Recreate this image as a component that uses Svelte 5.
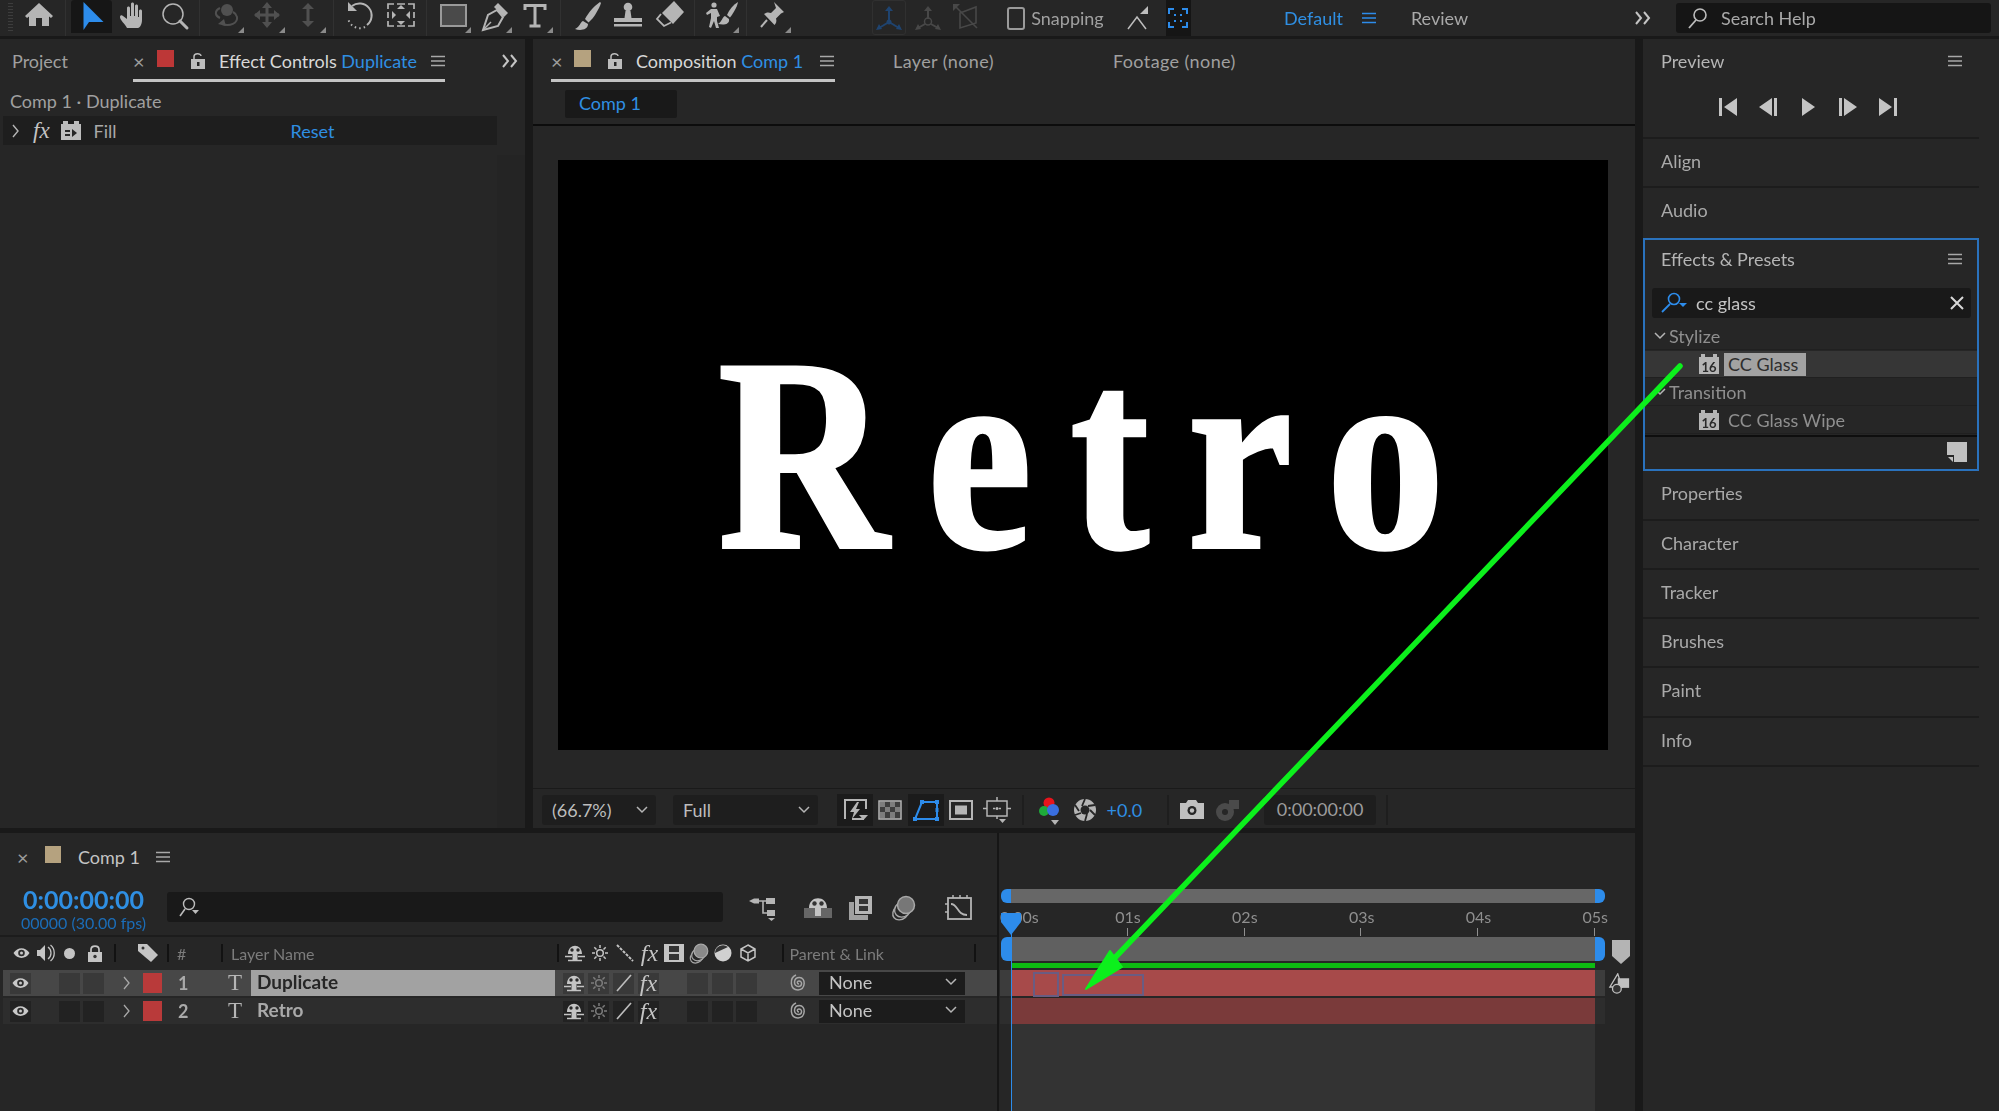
<script>
  // after effects workspace, cc glass lookup
  const G = "#b5b5b5";
  const D = "#505050";

  const toolGroups = [
    [
      { w: 50, svg: `<path d="M18 3 4 16l2 2 2-1.500V26h7v-8h6v8h7v-9.500l2 1.500 2-2z" fill="${G}"/>` },
    ],
    [
      { on: true, svg: `<path d="M9.500 2 29.500 22H15L9.500 30z" fill="#2d8ceb"/>` },
      { svg: `<path d="M12 28c-2-4-7-8-7-11 0-2 2-2 3-1l4 3V8c0-2 3-2 3 0v8h1V4c0-2 3-2 3 0v12h1V6c0-2 3-2 3 0v11h1v-6c0-2 3-2 3 0v9c0 4-2 8-4 8z" fill="${G}"/>` },
      { svg: `<circle cx="17" cy="14" r="10" fill="none" stroke="${G}" stroke-width="1.500"/><path d="m24 21 7 7" stroke="${G}" stroke-width="3" stroke-linecap="round"/>` },
    ],
    [
      { tri: true, svg: `<circle cx="19" cy="10" r="6" fill="${D}"/><path d="M12 8c-6 3-5 8 0 10M14 24c8 3 16-1 15-7-.5-2-2-4-4-5" fill="none" stroke="${D}" stroke-width="2"/><path d="m16 19-6 5 8 2z" fill="${D}"/>` },
      { tri: true, svg: `<path d="M18 4v22M6 15h24" stroke="${D}" stroke-width="3"/><path d="m18 2 5 6H13zM18 28l5-6H13zM5 15l6-5v10zM31 15l-6-5v10z" fill="${D}"/>` },
      { tri: true, svg: `<path d="M18 5v20" stroke="${D}" stroke-width="3"/><path d="m18 3 6 6H12zM18 27l6-6H12z" fill="${D}"/>` },
    ],
    [
      { svg: `<path d="M10 6A12 12 0 1 1 25 25" fill="none" stroke="${G}" stroke-width="2"/><path d="M6 2v9h9z" fill="${G}"/><path d="M23 27A12 12 0 0 1 6 18" fill="none" stroke="${G}" stroke-width="2" stroke-dasharray="1.500 3"/>` },
      { svg: `<path d="M5 9V4h6M25 4h6v5M31 21v5h-6M11 26H5v-5M14 4h8M14 26h8M5 12v6M31 12v6" fill="none" stroke="${G}" stroke-width="1.700"/><path d="m14 9 4-4 4 4zM14 21l4 4 4-4zM9 11v8l4-4zM27 11v8l-4-4z" fill="${G}"/>` },
    ],
    [
      { tri: true, svg: `<rect x="6" y="5" width="25" height="21" fill="#4a4a4a" stroke="#9a9a9a" stroke-width="2"/>` },
      { tri: true, svg: `<path d="m7 30 5-15 9-5 6 7-5 9z" fill="none" stroke="${G}" stroke-width="2"/><path d="m22 3 10 10-4 4-10-10z" fill="${G}"/><path d="m7 30 8-8" stroke="${G}" stroke-width="1.500"/>` },
      { tri: true, svg: `<path d="M8 10V5.500h20V10M18 5.500V26M12.500 26h11" fill="none" stroke="${G}" stroke-width="3"/>` },
    ],
    [
      { svg: `<path d="M31 2c-6 4-12 11-15 17l3.500 3.500C25 18 30 9 32 3z" fill="${G}"/><path d="M14 21c-3 1-3 6-8 8 5 2 13 1 13-5z" fill="${G}"/>` },
      { svg: `<circle cx="18" cy="7" r="4.300" fill="${G}"/><path d="M15.500 11h5l1 7H32v4H4v-4h10.500zM4 24h28v2.500H4z" fill="${G}"/>` },
      { svg: `<path d="m23 1 10 11-11 12-11-11z" fill="${G}"/><path d="m10 14-4 5 7 7 7-3.500" fill="none" stroke="${G}" stroke-width="1.800"/>` },
    ],
    [
      { tri: true, svg: `<circle cx="11" cy="5" r="2.600" fill="${G}"/><path d="M8 9h6l3 7-3 1v4l2 7h-3l-2-7-3 7-2-1 2-9v-5l-4 2-1-2z" fill="${G}"/><path d="M35 2c-5 3-9 8-11 13l3 2.500c3-4 7-10 8-15.500z" fill="${G}"/><path d="M22 16c-3 1-3 6-7 8 5 1 12 1 11-5z" fill="${G}"/>` },
    ],
    [
      { tri: true, svg: `<path d="m19 2 10 10-3 1.500-5 5c1 3 0 5-1.500 6.500L9 14c2-1.500 4-2 7-1l5-5-1-3z" fill="${G}"/><path d="m12 20-6 7" stroke="${G}" stroke-width="2"/>` },
    ],
  ];

  const viewerIcons = [
    { on: true, svg: `<path d="M5 24V5h21v9M24 24H12" fill="none" stroke="${G}" stroke-width="2"/><path d="m17 7-7 10h4l-2 7 8-10h-4l3-7z" fill="${G}"/><path d="m19 20h9l-4.500 5z" fill="${G}"/>` },
    { svg: `<rect x="4" y="6" width="22" height="18" fill="#3d3d3d" stroke="${G}" stroke-width="1.500"/><path d="M5 7h5v5H5zM15 7h5v5h-5zM10 12h5v5h-5zM20 12h5v5h-5zM5 17h5v6H5zM15 17h5v6h-5z" fill="#7d7d7d"/>` },
    { on: true, svg: `<path d="M11 7h15v17H4z" fill="none" stroke="#2d8ceb" stroke-width="2"/><path d="M9 5h4v4H9zM24 5h4v4h-4zM2 22h4v4H2zM24 22h4v4h-4zM24.500 13h3v4h-3z" fill="#2d8ceb"/>` },
    { svg: `<rect x="4" y="6" width="22" height="18" fill="none" stroke="${G}" stroke-width="2"/><rect x="9" y="10.500" width="12" height="9" fill="${G}"/>` },
    { svg: `<rect x="5" y="6" width="20" height="15" fill="none" stroke="${G}" stroke-width="1.500"/><path d="M15 2v4M15 21v3M1 13.500h4M25 13.500h4M11 13.500h2M17 13.500h2" stroke="${G}" stroke-width="1.500"/><circle cx="15" cy="13.500" r="1.500" fill="${G}"/><path d="M17 24h7l-3.500 4z" fill="${G}"/>` },
  ];

  const panels = ["Properties", "Character", "Tracker", "Brushes", "Paint", "Info"];
  const seconds = ["01s", "02s", "03s", "04s", "05s"];

  const layers = [
    { n: 1, name: "Duplicate", selected: true },
    { n: 2, name: "Retro", selected: false },
  ];
</script>

{#snippet burger(color = "#a8a8a8")}
  <svg class="burger" width="14" height="12" viewBox="0 0 14 12"><path d="M0 1.500h14M0 6h14M0 10.500h14" stroke={color} stroke-width="1.500" /></svg>
{/snippet}

{#snippet more()}
  <svg width="18" height="16" viewBox="0 0 18 16"><path d="m2 2 5 6-5 6M10 2l5 6-5 6" fill="none" stroke="#c4c4c4" stroke-width="2" /></svg>
{/snippet}

{#snippet lock()}
  <svg width="14" height="18" viewBox="0 0 14 18"><path d="M3 8V4.500C3 1 10 1 10 4" fill="none" stroke="#bdbdbd" stroke-width="1.500" /><rect x="0" y="7" width="14" height="10" fill="#bdbdbd" /><rect x="6" y="10" width="2.500" height="4" fill="#262626" /></svg>
{/snippet}

{#snippet badge16()}
  <svg width="20" height="20" viewBox="0 0 20 20"><path d="M0 3h2V0h4v3h8V0h4v3h2v17H0z" fill="#b5b5b5" /><text x="10" y="18" text-anchor="middle" font-size="13" font-weight="700" fill="#2a2a2a" font-family="Lato, sans-serif">16</text></svg>
{/snippet}

{#snippet eye()}
  <svg width="17" height="12" viewBox="0 0 17 12"><path d="M.5 6C4.500-.5 12.500-.5 16.500 6 12.500 12.500 4.500 12.500.5 6z" fill="#c8c8c8" /><circle cx="8.500" cy="6" r="3.300" fill="#2c2c2c" /><circle cx="8.500" cy="6" r="1.500" fill="#c8c8c8" /></svg>
{/snippet}

{#snippet shy()}
  <svg width="20" height="17" viewBox="0 0 20 17"><path d="M3 9C3-2 17-2 17 9h-4.500v7h-5V9z" fill="#c4c4c4" /><circle cx="7" cy="5" r="1.700" fill="#2a2a2a" /><circle cx="13" cy="5" r="1.700" fill="#2a2a2a" /><path d="M0 11.500h7M13 11.500h7M3 15.500h14" stroke="#c4c4c4" stroke-width="1.300" /></svg>
{/snippet}

{#snippet sun(color = "#c4c4c4")}
  <svg width="16" height="16" viewBox="0 0 16 16"><circle cx="8" cy="8" r="3.300" fill="none" stroke={color} stroke-width="1.500" /><path d="M8 0v3M8 13v3M0 8h3M13 8h3M2.300 2.300l2.200 2.200M11.500 11.500l2.200 2.200M13.700 2.300l-2.200 2.200M4.500 11.500l-2.200 2.200" stroke={color} stroke-width="1.500" /></svg>
{/snippet}

{#snippet fx(size = 24)}
  <span class="fx" style="font-size: {size}px">fx</span>
{/snippet}

{#snippet spiral()}
  <svg width="21" height="22" viewBox="0 0 21 22"><path d="M11 12c-2 0-2.500-3 0-3 3.500 0 3.500 5.500-.5 5.500-5.500 0-5.500-9 1-9 6.500 0 6.500 12-1.500 12.500C2 18 1 6 8 3" fill="none" stroke="#a6a6a6" stroke-width="1.500" /></svg>
{/snippet}

{#snippet chevron()}
  <svg width="12" height="8" viewBox="0 0 12 8"><path d="m1 1 5 5 5-5" fill="none" stroke="#b5b5b5" stroke-width="1.500" /></svg>
{/snippet}

<div class="app">
  <header class="toolbar">
    <i class="grip"></i>
    <div class="tools">
      {#each toolGroups as group}
        <div class="tool-group">
          {#each group as tool}
            <div class="tool" class:on={tool.on} style="width: {tool.w ?? 41}px">
              <svg width="36" height="36" viewBox="0 0 36 36">{@html tool.svg}</svg>
              {#if tool.tri}<i class="tri"></i>{/if}
            </div>
          {/each}
        </div>
      {/each}
    </div>
    <div class="axes">
      <div class="axis-on">
        <svg width="32" height="33" viewBox="0 0 32 33"><path d="M16 8v13L6 27m10-6 10 6" fill="none" stroke="#1f4470" stroke-width="2" /><path d="m16 5 4 5h-8zM3 29l6-1-3-5zM29 29l-6-1 3-5z" fill="#1f4470" /><circle cx="16" cy="21" r="2.500" fill="#1f4470" /></svg>
      </div>
      <svg width="34" height="33" viewBox="0 0 32 33"><path d="M16 8v10M13 23l-7 4m13-4 7 4" fill="none" stroke="#484848" stroke-width="2" /><path d="m16 5 4 5h-8zM3 29l6-1-3-5zM29 29l-6-1 3-5z" fill="#484848" /><circle cx="16" cy="20.500" r="3.500" fill="none" stroke="#484848" stroke-width="1.500" /></svg>
      <svg width="32" height="33" viewBox="0 0 32 33"><path d="M10 12 26 6v16L10 27zM5 5l22 22" fill="none" stroke="#484848" stroke-width="1.600" /><path d="M3 3h7L3 10z" fill="#484848" /></svg>
    </div>
    <div class="snap">
      <span class="box"></span>
      <span>Snapping</span>
      <svg class="snap-a" width="26" height="26" viewBox="0 0 26 26"><path d="M2 24 11 12l9 12" fill="none" stroke="#bdbdbd" stroke-width="1.500" /><path d="m14 9 8-8v8z" fill="#bdbdbd" /></svg>
      <div class="snap-b">
        <svg width="22" height="22" viewBox="0 0 22 22"><path d="M2 7V2h5M15 2h5v5M20 15v5h-5M7 20H2v-5" fill="none" stroke="#2d8ceb" stroke-width="2" /><path d="M7 7h2v2H7zM13 7h2v2h-2zM7 13h2v2H7zM13 13h2v2h-2z" fill="#2d8ceb" /></svg>
      </div>
    </div>
    <nav class="workspaces">
      <span class="blue">Default</span>
      {@render burger("#2d8ceb")}
      <span class="review">Review</span>
    </nav>
    <div class="more-top">{@render more()}</div>
    <div class="help">
      <svg width="24" height="22" viewBox="0 0 24 22"><circle cx="14" cy="8" r="6" fill="none" stroke="#bcbcbc" stroke-width="1.600" /><path d="m10 13-7 8" stroke="#bcbcbc" stroke-width="1.800" /></svg>
      <span>Search Help</span>
    </div>
  </header>

  <main class="main">
    <div class="work">
      <div class="upper">
        <section class="panel effect">
          <div class="tabs">
            <span class="tab-plain">Project</span>
            <div class="tab active effect-tab">
              <span class="x wide">×</span>
              <i class="swatch red"></i>
              {@render lock()}
              <span class="tab-name">Effect Controls <b>Duplicate</b></span>
              {@render burger()}
            </div>
            <div class="tab-more">{@render more()}</div>
          </div>
          <div class="crumb">Comp 1 · Duplicate</div>
          <div class="fx-row">
            <svg width="8" height="14" viewBox="0 0 8 14"><path d="m1 1 5 6-5 6" fill="none" stroke="#b5b5b5" stroke-width="1.400" /></svg>
            {@render fx(23)}
            <svg class="fx-ico" width="20" height="19" viewBox="0 0 20 19"><path d="M0 3h2V0h5v3h6V0h5v3h2v16H0z" fill="#bdbdbd" /><path d="M4 9h5v2H4zM4 13h5v2H4zM11 8l5 4-5 4z" fill="#262626" /></svg>
            <span class="fill">Fill</span>
            <span class="reset">Reset</span>
          </div>
          <div class="effect-side"></div>
        </section>

        <section class="panel comp">
          <div class="tabs comp-tabs">
            <div class="tab active comp-tab">
              <span class="x mid">×</span>
              <i class="swatch tan"></i>
              {@render lock()}
              <span class="tab-name">Composition <b>Comp 1</b></span>
              {@render burger()}
            </div>
            <span class="tab-plain layer-tab">Layer (none)</span>
            <span class="tab-plain footage-tab">Footage (none)</span>
          </div>
          <div class="flow">
            <span class="flow-chip">Comp 1</span>
          </div>
          <div class="viewer-wrap">
            <div class="viewer"><span class="retro">Retro</span></div>
          </div>
          <div class="viewer-bar">
            <div class="select zoom-select"><span>(66.7%)</span>{@render chevron()}</div>
            <div class="select full-select"><span>Full</span>{@render chevron()}</div>
            <div class="viewer-icons">
              {#each viewerIcons as ico}
                <div class="v-ico" class:on={ico.on}>
                  <svg width="30" height="30" viewBox="0 0 30 30">{@html ico.svg}</svg>
                </div>
              {/each}
            </div>
            <i class="bar-sep"></i>
            <svg class="rgb" width="26" height="36" viewBox="0 0 26 36"><circle cx="13" cy="10" r="5.500" fill="#e8141c" /><circle cx="8" cy="18" r="5" fill="#1eaa3a" /><circle cx="17" cy="17" r="6" fill="#3a6fe0" /><path d="m15 27 8 0-4 5z" fill="#b5b5b5" /></svg>
            <svg class="shutter" width="24" height="24" viewBox="0 0 24 24"><circle cx="12" cy="12" r="11" fill="#b5b5b5" /><circle cx="12" cy="12" r="4.500" fill="#262626" /><path d="M12 1 9 8M22 7l-7 1M22 17l-5-5M12 23l2-7M2 17l6-2M2 7l4 6" stroke="#262626" stroke-width="1.800" /></svg>
            <span class="exposure">+0.0</span>
            <i class="bar-sep two"></i>
            <svg class="camera" width="24" height="19" viewBox="0 0 24 19"><path d="M0 3h6l2-3h8l2 3h6v16H0z" fill="#c0c0c0" /><circle cx="12" cy="10.500" r="4.500" fill="#262626" /><circle cx="12" cy="10.500" r="2.200" fill="#c0c0c0" /></svg>
            <svg class="camera2" width="26" height="24" viewBox="0 0 26 24"><circle cx="10" cy="14" r="9" fill="#4a4a4a" /><circle cx="10" cy="14" r="3" fill="#262626" /><rect x="14" y="2" width="10" height="9" fill="#4a4a4a" /></svg>
            <div class="timecode-box">0:00:00:00</div>
            <span class="bar-end"></span>
          </div>
        </section>
      </div>

      <section class="panel timeline">
        <div class="tl-left">
          <div class="tl-tab">
            <span class="x tl-x">×</span>
            <i class="swatch tan small"></i>
            <span class="tl-name">Comp 1</span>
            {@render burger()}
          </div>
          <div class="tl-controls">
            <div class="clock">
              <div class="time">0:00:00:00</div>
              <div class="fps">00000 (30.00 fps)</div>
            </div>
            <div class="tl-search">
              <svg width="24" height="20" viewBox="0 0 24 20"><circle cx="11" cy="7" r="5.500" fill="none" stroke="#bcbcbc" stroke-width="1.400" /><path d="m7 12-5 7" stroke="#bcbcbc" stroke-width="1.600" /><path d="m14 13 7 0-3.500 4z" fill="#bcbcbc" /></svg>
            </div>
            <div class="tl-icons">
              <svg width="30" height="26" viewBox="0 0 30 26"><path d="M8 6h7v12h8M15 6h8" stroke="#b5b5b5" stroke-width="1.600" fill="none" /><path d="m1 6 5-2.500h5v5H6z" fill="#b5b5b5" /><rect x="18" y="3" width="9" height="6" fill="#b5b5b5" /><rect x="19" y="15" width="8" height="6" fill="#b5b5b5" /><path d="m20 23h7l-3.500 3z" fill="#b5b5b5" /></svg>
              <svg class="ti2" width="28" height="22" viewBox="0 0 28 22"><path d="M0 11h28v10H0z" fill="#666" /><path d="M5 11C5-2 23-2 23 11h-6v8h-6v-8z" fill="#c4c4c4" /><circle cx="10.500" cy="6.500" r="2.200" fill="#333" /><circle cx="17.500" cy="6.500" r="2.200" fill="#333" /></svg>
              <svg class="ti3" width="26" height="26" viewBox="0 0 26 26"><path d="M1 7h5v13h14v5H1z" fill="#a0a0a0" /><rect x="7" y="1" width="17" height="18" fill="#b5b5b5" /><path d="M11 4h9v5h-9zM11 11h9v5h-9z" fill="#333" /></svg>
              <svg class="ti4" width="26" height="26" viewBox="0 0 26 26"><ellipse cx="11" cy="17" rx="9" ry="7" transform="rotate(-40 11 17)" fill="none" stroke="#a8a8a8" stroke-width="1.400" /><ellipse cx="13" cy="14" rx="9" ry="7.500" transform="rotate(-40 13 14)" fill="#262626" stroke="#a8a8a8" stroke-width="1.400" /><circle cx="16" cy="10" r="8.500" fill="#777" stroke="#a8a8a8" stroke-width="1.500" /></svg>
              <svg class="ti5" width="28" height="26" viewBox="0 0 28 26"><rect x="3" y="3" width="23" height="21" fill="none" stroke="#b5b5b5" stroke-width="1.800" /><path d="M8 0v3M15 0v3M22 0v3M0 9h3M0 17h3" stroke="#b5b5b5" stroke-width="1.500" /><path d="M6 9c7 0 6 11 16 11" fill="none" stroke="#b5b5b5" stroke-width="1.800" /></svg>
            </div>
          </div>

          <div class="tl-head">
            <span class="h-eye">{@render eye()}</span>
            <svg class="h-sound" width="18" height="18" viewBox="0 0 18 18"><path d="M0 6h3l5-5v16l-5-5H0z" fill="#c4c4c4" /><path d="M11 3c4 3 4 9 0 12M13.500 1c5 4 5 12 0 16" fill="none" stroke="#c4c4c4" stroke-width="1.300" /></svg>
            <i class="dot"></i>
            <svg class="h-lock" width="14" height="17" viewBox="0 0 14 17"><path d="M3 8V4.500c0-4.500 8-4.500 8 0V8" fill="none" stroke="#c4c4c4" stroke-width="1.700" /><path d="M0 7h14v10H0z" fill="#c4c4c4" /><circle cx="7" cy="11.500" r="1.700" fill="#333" /></svg>
            <i class="sep s-lock"></i>
            <svg class="tag" width="22" height="20" viewBox="0 0 22 20"><path d="M1 1h9l11 11-7 7L1 8z" fill="#c4c4c4" /><circle cx="6" cy="5" r="1.500" fill="#333" /></svg>
            <i class="sep s-tag"></i>
            <span class="hash">#</span>
            <i class="sep s-hash"></i>
            <span class="h-name">Layer Name</span>
            <i class="sep"></i>
            <div class="head-sw">
              <span>{@render shy()}</span>
              <span>{@render sun()}</span>
              <span><svg width="18" height="18" viewBox="0 0 18 18"><path d="m1 1 16 16" stroke="#c4c4c4" stroke-width="2" stroke-dasharray="3 1.200" /></svg></span>
              <span>{@render fx()}</span>
              <span><svg width="20" height="18" viewBox="0 0 20 18"><rect x="0" y="0" width="20" height="18" fill="#c4c4c4" /><rect x="5" y="2" width="10" height="6" fill="#333" /><rect x="5" y="10" width="10" height="6" fill="#333" /></svg></span>
              <span><svg width="21" height="21" viewBox="0 0 26 26"><ellipse cx="11" cy="17" rx="9" ry="7" transform="rotate(-40 11 17)" fill="none" stroke="#a8a8a8" stroke-width="1.500" /><ellipse cx="13" cy="14" rx="9" ry="7.500" transform="rotate(-40 13 14)" fill="#262626" stroke="#a8a8a8" stroke-width="1.500" /><circle cx="16" cy="10" r="8.500" fill="#8a8a8a" stroke="#a8a8a8" stroke-width="1.500" /></svg></span>
              <span><svg width="18" height="18" viewBox="0 0 18 18"><circle cx="9" cy="9" r="8.500" fill="#d0d0d0" /><path d="M1 9a8 8 0 0 1 13-6z" fill="#333" /></svg></span>
              <span><svg width="16" height="18" viewBox="0 0 16 18"><path d="m8 1 7 4v8l-7 4-7-4V5zM1 5l7 4 7-4M8 9v8" fill="none" stroke="#c4c4c4" stroke-width="1.500" /></svg></span>
            </div>
            <i class="sep s-sw"></i>
            <span class="h-parent">Parent &amp; Link</span>
            <i class="sep"></i>
          </div>

          {#each layers as layer}
            <div class="layer" class:sel={layer.selected}>
              <div class="cell eye-cell">{@render eye()}</div>
              <div class="cell c1"></div>
              <div class="cell c2"></div>
              <svg class="twirl" width="8" height="14" viewBox="0 0 8 14"><path d="m1 1 5 6-5 6" fill="none" stroke="#a8a8a8" stroke-width="1.300" /></svg>
              <i class="label"></i>
              <span class="num">{layer.n}</span>
              <span class="t-ico">T</span>
              <span class="lname" class:chip={layer.selected}>{layer.name}</span>
              <div class="switches">
                <div class="cell sw">{@render shy()}</div>
                <div class="cell sw">{@render sun("#7c7c7c")}</div>
                <div class="cell sw"><svg width="16" height="18" viewBox="0 0 16 18"><path d="M1 17 15 1" stroke="#bdbdbd" stroke-width="1.700" /></svg></div>
                <div class="cell sw">{@render fx()}</div>
              </div>
              <div class="cell s1"></div>
              <div class="cell s2"></div>
              <div class="cell s3"></div>
              <div class="spiral">{@render spiral()}</div>
              <div class="none"><span>None</span>{@render chevron()}</div>
            </div>
          {/each}
        </div>

        <div class="tl-right">
          <div class="range">
            <i class="cap l"></i>
            <div class="range-bar"></div>
            <i class="cap r"></i>
          </div>
          <div class="ruler">
            <span class="zero">0:00s</span>
            {#each seconds as s}
              <div class="sec"><span>{s}</span><i></i></div>
            {/each}
          </div>
          <div class="work-area">
            <i class="cap l"></i>
            <div class="area-bar"></div>
            <i class="cap r"></i>
            <svg class="marker" width="18" height="24" viewBox="0 0 18 24"><path d="M0 0h18v16l-9 8-9-8z" fill="#b4b4b4" /></svg>
          </div>
          <div class="green-line"></div>
          <div class="bar-row hi">
            <div class="bar b1">
              <i class="ghost g1"></i>
              <i class="ghost g2"></i>
            </div>
            <svg class="comp-btn" width="23" height="21" viewBox="0 0 26 24"><path d="M11 1 2 16h14z" fill="none" stroke="#c0c0c0" stroke-width="1.500" /><rect x="11" y="6" width="13" height="11" fill="#c0c0c0" /><circle cx="10" cy="18" r="5" fill="#333" stroke="#c0c0c0" stroke-width="1.500" /></svg>
          </div>
          <div class="bar-row low">
            <div class="bar b2"></div>
          </div>
          <div class="track-rest"></div>
          <i class="playhead"></i>
          <svg class="head" width="20" height="22" viewBox="0 0 20 22"><path d="M0 0h20v9L10 22 0 9z" fill="#2d8ceb" /></svg>
        </div>
      </section>
    </div>

    <aside class="side">
      <section class="preview">
        <div class="side-title between"><span>Preview</span>{@render burger()}</div>
        <div class="transport">
          <svg width="20" height="18" viewBox="0 0 20 18"><path d="M1 0h3v18H1zM19 0v18L6 9z" fill="#c4c4c4" /></svg>
          <svg width="20" height="18" viewBox="0 0 20 18"><path d="M16 0h3v18h-3zM14 0v18L1 9z" fill="#c4c4c4" /></svg>
          <svg width="20" height="18" viewBox="0 0 20 18"><path d="M4 0v18l13-9z" fill="#c4c4c4" /></svg>
          <svg width="20" height="18" viewBox="0 0 20 18"><path d="M1 0h3v18H1zM6 0v18l13-9z" fill="#c4c4c4" /></svg>
          <svg width="20" height="18" viewBox="0 0 20 18"><path d="M16 0h3v18h-3zM1 0v18l13-9z" fill="#c4c4c4" /></svg>
        </div>
      </section>
      <div class="side-row">Align</div>
      <div class="side-row last">Audio</div>

      <section class="presets">
        <div class="side-title between"><span>Effects &amp; Presets</span>{@render burger()}</div>
        <div class="preset-search">
          <svg width="28" height="22" viewBox="0 0 28 22"><circle cx="14" cy="7" r="5.500" fill="none" stroke="#2d8ceb" stroke-width="1.600" /><path d="m10 12-8 8" stroke="#2d8ceb" stroke-width="1.800" /><path d="m19 11 8 0-4 4z" fill="#2d8ceb" /></svg>
          <span class="q">cc glass</span>
          <svg class="clear" width="14" height="14" viewBox="0 0 14 14"><path d="m1 1 12 12M13 1 1 13" stroke="#d8d8d8" stroke-width="2" /></svg>
        </div>
        <div class="tree folder">{@render chevron()}<span>Stylize</span></div>
        <div class="tree item sel">{@render badge16()}<span class="sel-chip">CC Glass</span></div>
        <div class="tree folder">{@render chevron()}<span>Transition</span></div>
        <div class="tree item">{@render badge16()}<span class="plain-item">CC Glass Wipe</span></div>
        <div class="preset-foot">
          <svg width="20" height="20" viewBox="0 0 20 20"><path d="M0 0h20v20H7v-7H0z" fill="#c0c0c0" /><path d="M1 15h5v5z" fill="#c0c0c0" /></svg>
        </div>
      </section>

      {#each panels as p}
        <div class="side-row">{p}</div>
      {/each}
    </aside>
  </main>

  <svg class="arrow" width="1999" height="1111" viewBox="0 0 1999 1111">
    <path d="M1680 366 1107 966" stroke="#0cf01c" stroke-width="5.500" stroke-linecap="round" />
    <path d="M1086 989 1110 951 1122 967 Z" fill="#0cf01c" stroke="#0cf01c" stroke-width="2" stroke-linejoin="round" />
  </svg>
</div>

<style>
  :global(body) {
    margin: 0;
    background: #191919;
    overflow: hidden;
  }

  .app {
    position: relative;
    width: 1999px;
    height: 1111px;
    font-family: Lato, "Open Sans", sans-serif;
    font-size: 18px;
    color: #a9a9a9;
    overflow: hidden;
    filter: blur(0.35px);
  }

  svg {
    display: block;
    flex: none;
  }

  .blue,
  b {
    color: #2f8fe3;
    font-weight: 400;
  }

  /* top bar */
  .toolbar {
    height: 36px;
    display: flex;
    align-items: center;
    background: #262626;
    position: relative;
  }

  .grip {
    position: absolute;
    left: 8px;
    top: 3px;
    bottom: 4px;
    width: 5px;
    background: repeating-linear-gradient(#3d3d3d 0 1px, transparent 1px 3px);
  }

  .tools {
    display: flex;
    padding-left: 14px;
    width: 864px;
    flex: none;
    box-sizing: border-box;
  }

  .tool-group {
    display: flex;
    padding-right: 5px;
    margin-right: 6px;
    box-shadow: 1px 0 0 #313131;
  }

  .tool-group:first-child {
    padding-right: 1px;
  }

  .tool-group:last-child {
    box-shadow: none;
  }

  .tool {
    position: relative;
    height: 36px;
    display: flex;
    align-items: center;
    justify-content: center;
  }

  .tool.on {
    background: linear-gradient(#161616 33px, transparent 33px);
    border-radius: 3px;
  }

  .tri {
    position: absolute;
    right: 2px;
    bottom: 3px;
    border-left: 6px solid transparent;
    border-bottom: 6px solid #8a8a8a;
  }

  .axes {
    display: flex;
    gap: 5px;
    width: 139px;
    flex: none;
    margin-left: 8px;
    margin-right: -8px;
  }

  .axis-on {
    border: 1px solid #303030;
    border-radius: 3px;
    height: 33px;
    margin-top: -1px;
  }

  .snap {
    display: flex;
    align-items: center;
    color: #a0a0a0;
    width: 188px;
    flex: none;
  }

  .box {
    width: 22px;
    height: 23px;
    border: 2px solid #9a9a9a;
    border-radius: 3px;
    margin-right: 6px;
    box-sizing: border-box;
    margin-left: 4px;
  }

  .snap-a {
    margin-left: 22px;
  }

  .snap-b {
    margin-left: 14px;
    width: 32px;
    height: 36px;
    display: flex;
    align-items: center;
    justify-content: center;
    background: #151515;
  }

  .workspaces {
    display: flex;
    align-items: center;
    gap: 19px;
    width: 443px;
    flex: none;
    padding-left: 93px;
    box-sizing: border-box;
  }

  .review {
    margin-left: 16px;
  }

  .more-top {
    width: 42px;
    flex: none;
  }

  .help {
    flex: 1;
    height: 30px;
    margin-right: 8px;
    display: flex;
    align-items: center;
    gap: 11px;
    padding-left: 10px;
    background: #151515;
    border-radius: 3px;
  }

  /* panel grid */
  .main {
    display: flex;
    gap: 8px;
    height: 1072px;
    margin-top: 3px;
  }

  .work {
    width: 1635px;
    flex: none;
    display: flex;
    flex-direction: column;
    gap: 5px;
  }

  .upper {
    display: flex;
    gap: 8px;
    height: 789px;
    flex: none;
  }

  .panel {
    background: #262626;
    position: relative;
  }

  .effect {
    width: 525px;
    flex: none;
  }

  .comp {
    flex: 1;
    display: flex;
    flex-direction: column;
  }

  .tabs {
    display: flex;
    align-items: center;
    height: 43px;
    position: relative;
  }

  .tab-plain {
    margin-left: 12px;
    color: #a0a0a0;
  }

  .tab {
    display: flex;
    align-items: center;
    height: 43px;
    box-sizing: border-box;
    border-bottom: 3px solid #c4c4c4;
    padding-top: 3px;
  }

  .effect-tab {
    margin-left: 65px;
    width: 312px;
  }

  .x {
    font-size: 20px;
    color: #9c9c9c;
    width: 18px;
  }

  .x.wide {
    width: 27px;
  }

  .x.mid {
    width: 23px;
  }

  .x.tl-x {
    width: 28px;
  }

  .swatch {
    width: 17px;
    height: 17px;
    margin-right: 17px;
    margin-top: -5px;
    flex: none;
  }

  .red {
    background: #bd3737;
  }

  .tan {
    background: #b5a27f;
  }

  .tab-name {
    color: #d8d8d8;
    margin-left: 14px;
    margin-right: 14px;
    white-space: nowrap;
  }

  .comp-tab .tab-name {
    margin-right: 17px;
  }

  .tab-more {
    margin-left: 56px;
  }

  .crumb {
    height: 34px;
    line-height: 38px;
    padding-left: 10px;
    color: #a0a0a0;
  }

  .fx-row {
    margin-left: 3px;
    width: 494px;
    height: 29px;
    display: flex;
    align-items: center;
    background: #1e1e1e;
    padding-left: 9px;
    box-sizing: border-box;
  }

  .fx {
    font-family: "Liberation Serif", serif;
    font-style: italic;
    color: #c4c4c4;
    line-height: 1;
  }

  .fx-row .fx {
    margin-left: 13px;
  }

  .fx-ico {
    margin-left: 11px;
  }

  .fill {
    margin-left: 13px;
  }

  .reset {
    margin-left: 174px;
    color: #2f8fe3;
  }

  .effect-side {
    position: absolute;
    left: 497px;
    top: 116px;
    bottom: 0;
    width: 28px;
    background: #242424;
  }

  .comp-tab {
    margin-left: 18px;
    width: 284px;
  }

  .layer-tab {
    margin-left: 58px;
    letter-spacing: 0.4px;
  }

  .footage-tab {
    margin-left: 119px;
    letter-spacing: 0.4px;
  }

  .flow {
    height: 44px;
    flex: none;
    padding: 8px 0 0 32px;
    box-sizing: border-box;
    border-bottom: 2px solid #0c0c0c;
  }

  .flow-chip {
    display: block;
    width: 112px;
    height: 28px;
    line-height: 27px;
    padding-left: 14px;
    box-sizing: border-box;
    background: #191919;
    color: #2f8fe3;
    border-radius: 2px;
  }

  .viewer-wrap {
    flex: 1;
    padding: 34px 27px 0 25px;
  }

  .viewer {
    height: 590px;
    background: #000;
    display: flex;
    align-items: center;
    justify-content: center;
  }

  .retro {
    display: inline-block;
    font-family: "Liberation Serif", serif;
    font-weight: 700;
    font-size: 274px;
    color: #fff;
    letter-spacing: 45px;
    margin-right: -35px;
    line-height: 1;
    transform: scaleX(0.86);
    -webkit-text-stroke: 4px #fff;
    stroke-linejoin: round;
  }

  .viewer-bar {
    height: 40px;
    flex: none;
    display: flex;
    align-items: center;
    padding: 2px 0 0 9px;
    box-sizing: border-box;
    border-top: 1px solid #1a1a1a;
  }

  .select {
    height: 30px;
    display: flex;
    align-items: center;
    justify-content: space-between;
    background: #1e1e1e;
    border-radius: 3px;
    padding: 0 8px 0 10px;
    box-sizing: border-box;
    color: #bdbdbd;
    flex: none;
  }

  .zoom-select {
    width: 114px;
  }

  .full-select {
    width: 145px;
    margin-left: 17px;
  }

  .viewer-icons {
    display: flex;
    margin-left: 19px;
  }

  .v-ico {
    width: 35.500px;
    height: 32px;
    display: flex;
    align-items: center;
    justify-content: center;
  }

  .v-ico.on {
    background: #1b1b1b;
  }

  .bar-sep {
    width: 2px;
    height: 30px;
    margin-left: 7px;
    background: #1e1e1e;
    flex: none;
  }

  .bar-sep.two {
    margin-left: 25px;
  }

  .rgb {
    margin-left: 12px;
    margin-top: 2px;
  }

  .shutter {
    margin-left: 11px;
  }

  .exposure {
    margin-left: 10px;
    color: #2f8fe3;
  }

  .camera {
    margin-left: 11px;
  }

  .camera2 {
    margin-left: 11px;
  }

  .timecode-box {
    margin-left: 23px;
    width: 112px;
    height: 30px;
    line-height: 29px;
    text-align: center;
    background: #1e1e1e;
    border-radius: 3px;
    color: #9c9c9c;
  }

  .bar-end {
    margin-left: 10px;
    width: 2px;
    height: 30px;
    background: #1e1e1e;
  }

  /* timeline */
  .timeline {
    flex: 1;
    display: flex;
    min-height: 0;
  }

  .tl-left {
    width: 999px;
    flex: none;
    border-right: 2px solid #161616;
    box-sizing: border-box;
  }

  .tl-tab {
    height: 38px;
    padding: 5px 0 0 17px;
    display: flex;
    align-items: center;
  }

  .tl-tab .swatch {
    margin: -6px 17px 0 0;
  }

  .small {
    width: 16px;
    height: 17px;
  }

  .tl-name {
    color: #c4c4c4;
    margin-right: 16px;
  }

  .tl-controls {
    height: 61px;
    display: flex;
    align-items: flex-start;
    border-bottom: 2px solid #1c1c1c;
    box-sizing: border-box;
  }

  .clock {
    width: 167px;
    flex: none;
    text-align: center;
    padding-top: 10px;
    box-sizing: border-box;
  }

  .time {
    color: #2f8fe3;
    font-size: 25px;
    font-weight: 700;
    line-height: 26px;
  }

  .fps {
    color: #1b6db8;
    font-size: 16px;
    line-height: 20px;
    margin-top: 1px;
  }

  .tl-search {
    width: 556px;
    height: 30px;
    margin-top: 16px;
    background: #191919;
    border-radius: 3px;
    display: flex;
    align-items: center;
    padding-left: 11px;
    box-sizing: border-box;
  }

  .tl-icons {
    display: flex;
    align-items: center;
    height: 26px;
    margin: 19px 0 0 25px;
  }

  .ti2 {
    margin-left: 26px;
  }

  .ti3 {
    margin-left: 16px;
  }

  .ti4 {
    margin-left: 16px;
  }

  .ti5 {
    margin-left: 29px;
  }

  .tl-head {
    height: 31px;
    padding-top: 1px;
    box-sizing: border-box;
    display: flex;
    align-items: center;
    font-size: 16px;
    color: #7c7c7c;
  }

  .h-eye {
    margin-left: 13px;
  }

  .h-sound {
    margin-left: 7px;
  }

  .dot {
    width: 11px;
    height: 11px;
    border-radius: 50%;
    background: #c4c4c4;
    margin-left: 9px;
    flex: none;
  }

  .h-lock {
    margin-left: 13px;
  }

  .sep {
    width: 2px;
    height: 18px;
    background: #121212;
    flex: none;
  }

  .s-lock {
    margin-left: 12px;
  }

  .tag {
    margin-left: 21px;
  }

  .s-tag {
    margin-left: 8px;
  }

  .hash {
    margin-left: 8px;
    width: 10px;
    flex: none;
  }

  .s-hash {
    margin-left: 34px;
  }

  .h-name {
    margin-left: 8px;
    width: 326px;
    flex: none;
  }

  .head-sw {
    display: flex;
    align-items: center;
    margin-left: 4px;
    flex: none;
  }

  .head-sw span {
    width: 24.700px;
    display: flex;
    justify-content: center;
  }

  .s-sw {
    margin-left: 21px;
  }

  .h-parent {
    margin-left: 6px;
    width: 184px;
    flex: none;
  }

  .layer {
    height: 26px;
    margin: 2px 0 0 3px;
    display: flex;
    align-items: center;
    background: #2d2d2d;
  }

  .layer.sel {
    background: #474747;
  }

  .cell {
    height: 21px;
    display: flex;
    align-items: center;
    justify-content: center;
    background: #222;
    flex: none;
  }

  .sel .cell {
    background: #393939;
  }

  .eye-cell {
    width: 21px;
    margin-left: 7px;
  }

  .c1 {
    width: 21px;
    margin-left: 28px;
  }

  .c2 {
    width: 21px;
    margin-left: 3px;
  }

  .twirl {
    margin-left: 19px;
  }

  .label {
    width: 19px;
    height: 20px;
    background: #b93a3a;
    margin-left: 12px;
    flex: none;
  }

  .num {
    margin-left: 16px;
    width: 50px;
    font-weight: 700;
    color: #a9a9a9;
    flex: none;
  }

  .t-ico {
    font-family: "Liberation Serif", serif;
    font-size: 23px;
    color: #b5b5b5;
    width: 23px;
    flex: none;
  }

  .lname {
    width: 304px;
    height: 26px;
    line-height: 24px;
    padding-left: 6px;
    box-sizing: border-box;
    font-weight: 700;
    font-size: 19px;
    color: #a9a9a9;
    flex: none;
  }

  .lname.chip {
    background: #a2a2a2;
    color: #262626;
  }

  .switches {
    display: flex;
    gap: 4px;
    margin-left: 8px;
  }

  .sw {
    width: 21px;
  }

  .s1 {
    width: 21px;
    margin-left: 28px;
  }

  .s2 {
    width: 21px;
    margin-left: 4px;
  }

  .s3 {
    width: 21px;
    margin-left: 3px;
  }

  .spiral {
    margin-left: 31px;
    width: 21px;
    flex: none;
  }

  .none {
    margin-left: 10px;
    width: 146px;
    height: 23px;
    display: flex;
    align-items: center;
    justify-content: space-between;
    background: #1c1c1c;
    color: #c4c4c4;
    padding: 0 8px 2px 10px;
    box-sizing: border-box;
    flex: none;
  }

  .tl-right {
    flex: 1;
    position: relative;
    display: flex;
    flex-direction: column;
    padding-left: 1px;
  }

  .range {
    display: flex;
    margin: 56px 30px 0 0;
    height: 14px;
    flex: none;
  }

  .range-bar,
  .area-bar {
    flex: 1;
    background: #676767;
  }

  .cap {
    width: 10px;
    background: #2d8ceb;
    flex: none;
  }

  .cap.l {
    border-radius: 6px 0 0 6px;
    margin-left: 1px;
  }

  .cap.r {
    border-radius: 0 6px 6px 0;
  }

  .ruler {
    height: 34px;
    display: flex;
    padding-left: 11px;
    flex: none;
    position: relative;
    color: #8f8f8f;
    font-size: 16px;
  }

  .zero {
    position: absolute;
    left: 0;
    top: 4px;
  }

  .sec {
    width: 116.800px;
    flex: none;
    position: relative;
    height: 34px;
  }

  .sec span {
    position: absolute;
    right: -13px;
    top: 4px;
  }

  .sec i {
    position: absolute;
    right: 0;
    top: 25px;
    width: 1px;
    height: 8px;
    background: #8f8f8f;
  }

  .work-area {
    display: flex;
    height: 24px;
    margin-right: 30px;
    position: relative;
    flex: none;
  }

  .area-bar {
    background: #606060;
  }

  .marker {
    position: absolute;
    right: -25px;
    top: 3px;
  }

  .green-line {
    height: 5px;
    margin: 2px 40px 0 12px;
    background: #0dbb12;
    flex: none;
  }

  .bar-row {
    height: 26px;
    margin-top: 2px;
    background: #3c3c3c;
    padding-left: 12px;
    margin-right: 30px;
    position: relative;
    flex: none;
  }

  .bar-row.low {
    background: #2d2d2d;
  }

  .bar {
    height: 26px;
    width: 583px;
    position: relative;
  }

  .b1 {
    background: #a74a4a;
  }

  .b2 {
    background: #7a3a3a;
  }

  .ghost {
    position: absolute;
    box-sizing: border-box;
    border: 2px solid #6a5c82;
  }

  .g1 {
    left: 21px;
    top: 2px;
    bottom: -1px;
    width: 26px;
  }

  .g2 {
    left: 50px;
    top: 4px;
    bottom: 0;
    width: 82px;
  }

  .comp-btn {
    position: absolute;
    right: -26px;
    top: 3px;
  }

  .track-rest {
    flex: 1;
    margin: 0 40px 0 12px;
    background: #333;
  }

  .playhead {
    position: absolute;
    left: 12px;
    top: 80px;
    bottom: 0;
    width: 1px;
    background: #2d8ceb;
  }

  .head {
    position: absolute;
    left: 2px;
    top: 80px;
  }

  /* right dock */
  .side {
    width: 336px;
    flex: none;
    background: #262626;
    margin-right: 20px;
    box-shadow: 20px 0 0 #262626;
  }

  .preview {
    height: 100px;
    border-bottom: 2px solid #1c1c1c;
    box-sizing: border-box;
  }

  .side-title {
    height: 43px;
    padding: 0 17px 0 18px;
    display: flex;
    align-items: center;
    color: #b5b5b5;
  }

  .between {
    justify-content: space-between;
  }

  .transport {
    display: flex;
    justify-content: center;
    gap: 20px;
    margin-top: 16px;
    padding-right: 6px;
  }

  .side-row {
    height: 49.300px;
    box-sizing: border-box;
    border-bottom: 2px solid #1c1c1c;
    padding: 11px 0 0 18px;
    color: #a9a9a9;
  }

  .side-row.last {
    height: 50px;
    border-bottom: 0;
  }

  .presets {
    height: 233px;
    border: 2px solid #2a72bd;
    box-sizing: border-box;
  }

  .presets .side-title {
    height: 38px;
    padding: 0 15px 0 16px;
    box-sizing: border-box;
  }

  .preset-search {
    height: 30px;
    margin: 10px 6px 5px 7px;
    background: #191919;
    border-radius: 3px;
    display: flex;
    align-items: center;
    padding-left: 8px;
    gap: 8px;
    color: #c4c4c4;
  }

  .clear {
    margin-left: auto;
    margin-right: 7px;
  }

  .tree {
    height: 27px;
    display: flex;
    align-items: center;
    border-bottom: 1px solid #202020;
    box-sizing: border-box;
    margin-bottom: 1px;
  }

  .folder {
    padding-left: 9px;
    gap: 3px;
    color: #8f8f8f;
  }

  .item {
    padding-left: 54px;
  }

  .item.sel {
    background: #363636;
  }

  .sel-chip {
    margin-left: 5px;
    width: 82px;
    height: 23px;
    line-height: 22px;
    padding-left: 4px;
    box-sizing: border-box;
    background: #a2a2a2;
    color: #2e2e2e;
  }

  .plain-item {
    margin-left: 9px;
    color: #8f8f8f;
  }

  .preset-foot {
    border-top: 2px solid #0e0e0e;
    height: 30px;
    display: flex;
    justify-content: flex-end;
    align-items: center;
    padding-right: 10px;
    margin-top: 1px;
  }

  .arrow {
    position: absolute;
    left: 0;
    top: 0;
    pointer-events: none;
  }
</style>
